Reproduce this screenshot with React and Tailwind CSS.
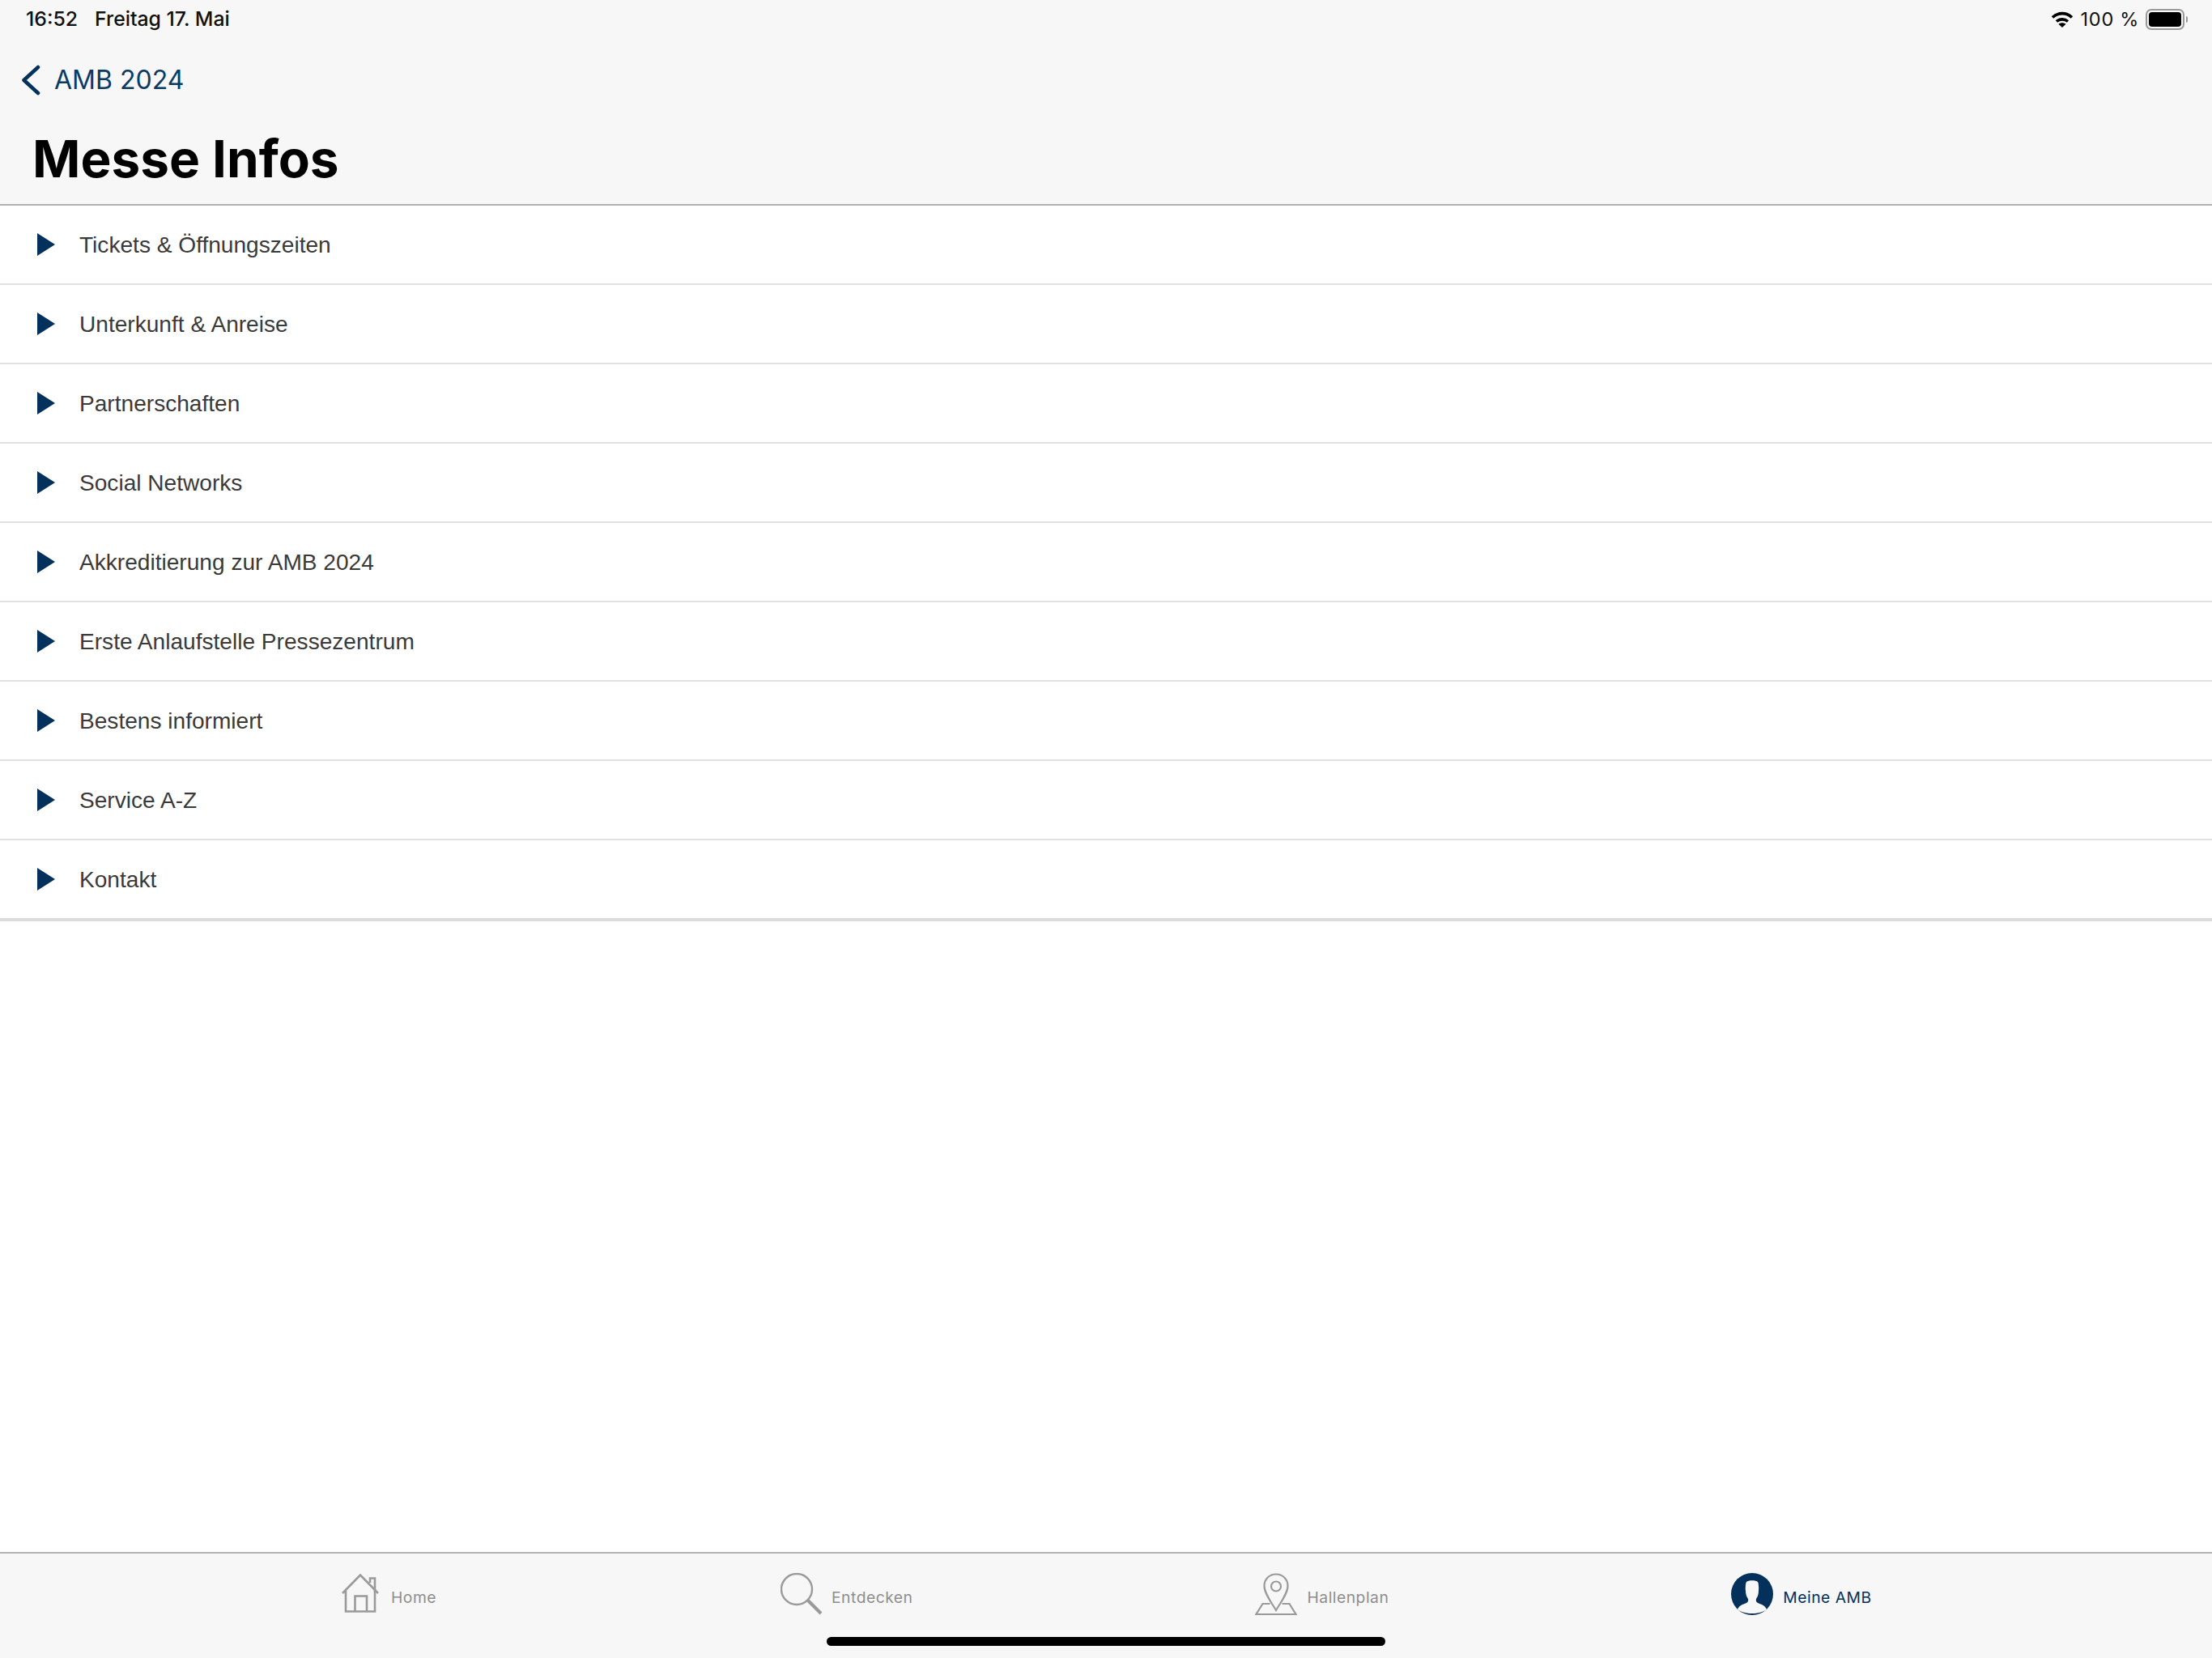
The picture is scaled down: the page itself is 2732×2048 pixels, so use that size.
const rows = [
  "Tickets & Öffnungszeiten",
  "Unterkunft & Anreise",
  "Partnerschaften",
  "Social Networks",
  "Akkreditierung zur AMB 2024",
  "Erste Anlaufstelle Pressezentrum",
  "Bestens informiert",
  "Service A-Z",
  "Kontakt",
];

function Row({ label, last }) {
  return (
    <div className={last ? "flex h-[100px] items-center border-b-4 border-[#dcdcdc] pl-[46px]" : "flex h-[98px] items-center border-b-2 border-[#e0e0e0] pl-[46px]"}>
      <svg width="22" height="28" viewBox="0 0 22 28" className="shrink-0">
        <path d="M0 0L22 14L0 28Z" fill="#04315c" />
      </svg>
      <span className="ml-[30px] mt-[2px] font-['Liberation_Sans',sans-serif] text-[28.1px] leading-none text-[#3a3a3a]">{label}</span>
    </div>
  );
}

function Tab({ ml, icon, label, gap, active }) {
  return (
    <div className={`${ml} flex items-center`}>
      {icon}
      <span className={`${gap} mt-[10px] font-['Inter',sans-serif] text-[19.3px] tracking-[0.5px] leading-none ${active ? "text-[#04315c]" : "text-[#8e8e8e]"}`}>{label}</span>
    </div>
  );
}

const HomeIcon = (
  <svg width="46" height="50" viewBox="0 0 46 50" fill="none" stroke="#9a9a9a" strokeWidth="2.6" className="shrink-0">
    <path d="M1 24L23 1.5L45 24" />
    <path d="M5 21V46.5H41V21" />
    <path d="M16.5 46.5V27.5H31V46.5" />
    <path d="M35 11V5.5H41V22" />
  </svg>
);
const SearchIcon = (
  <svg width="52" height="52" viewBox="0 0 52 52" fill="none" stroke="#9a9a9a" className="shrink-0">
    <circle cx="20" cy="20" r="19" strokeWidth="2.4" />
    <path d="M33.5 33.5L50 50" strokeWidth="4" />
  </svg>
);
const PinIcon = (
  <svg width="52" height="52" viewBox="0 0 52 52" fill="none" stroke="#9a9a9a" strokeWidth="2.2" className="shrink-0">
    <path d="M26 46C20 36 11.5 25 11.5 16C11.5 7.5 18 1.5 26 1.5C34 1.5 40.5 7.5 40.5 16C40.5 25 32 36 26 46Z" />
    <circle cx="26" cy="16.5" r="6" />
    <path d="M18.5 38H9.5L1.5 51H50.5L42.5 38H33.5" />
  </svg>
);
const UserIcon = (
  <svg width="52" height="52" viewBox="0 0 52 52" className="shrink-0">
    <circle cx="26" cy="26" r="26" fill="#04315c" />
    <path d="M8 45C10 40 14 39 19 37C21 36 21.5 34 21 32C19 29 18 26 18 22C17.5 19 18 12 19 11C21 8.5 31 8.5 33 11C34 12 34.5 19 34 22C34 26 33 29 31 32C30.5 34 31 36 33 37C38 39 42 40 44 45C40 48.5 33 50 26 50C19 50 12 48.5 8 45Z" fill="#f7f7f7" />
  </svg>
);

export default function App() {
  return (
    <div className="flex h-[2048px] w-[2732px] flex-col overflow-hidden bg-white font-['Inter',sans-serif]">
      <header className="h-[254px] shrink-0 border-b-2 border-[#b2b2b2] bg-[#f7f7f7]">
        <div className="flex h-[47px] items-center justify-between pl-[32px] pr-[30px] text-[#111111]">
          <div className="flex gap-[21px] text-[24.8px]">
            <span className="font-medium">16:52</span>
            <span className="font-medium">Freitag 17. Mai</span>
          </div>
          <div className="flex items-center text-[23.5px]">
            <svg width="28" height="20" viewBox="0 0 28 20" className="mr-[9px]" fill="none" stroke="#000000" strokeWidth="3.6">
              <path d="M2 7.5C9 1 19 1 26 7.5" />
              <path d="M7 12.5C11 9 17 9 21 12.5" />
              <path d="M14 20L9.5 15.8C12 13.8 16 13.8 18.5 15.8Z" fill="#000000" stroke="none" />
            </svg>
            <span className="tracking-[0.7px]">100 %</span>
            <div className="ml-[8px] flex h-[26px] w-[48px] items-center rounded-[7px] border-2 border-[#9a9a9a] p-[2px]">
              <div className="h-full w-full rounded-[4px] bg-black" />
            </div>
            <div className="ml-[2px] h-[8px] w-[2px] rounded-r-sm bg-[#9a9a9a]" />
          </div>
        </div>
        <div className="mt-[18px] flex h-[68px] items-center pl-[27px]">
          <svg width="24" height="38" viewBox="0 0 24 38" fill="none" stroke="#04315c" strokeWidth="4.5" strokeLinecap="round" strokeLinejoin="round">
            <path d="M20 3L2.5 19L20 35" />
          </svg>
          <span className="ml-[16px] text-[32px] leading-none text-[#0a3a66]">AMB 2024</span>
        </div>
        <h1 className="mt-[23px] pl-[40px] text-[63.8px] leading-[80px] font-bold text-black">Messe Infos</h1>
      </header>

      <main className="flex-1">
        {rows.map((r, i) => (
          <Row key={r} label={r} last={i === rows.length - 1} />
        ))}
      </main>

      <footer className="relative h-[131px] shrink-0 border-t-2 border-[#b2b2b2] bg-[#f7f7f7]">
        <div className="flex pt-[24px]">
          <Tab ml="ml-[422px]" icon={HomeIcon} label="Home" gap="ml-[15px]" />
          <Tab ml="ml-[425px]" icon={SearchIcon} label="Entdecken" gap="ml-[11px]" />
          <Tab ml="ml-[423px]" icon={PinIcon} label="Hallenplan" gap="ml-[12px]" />
          <Tab ml="ml-[423px]" icon={UserIcon} label="Meine AMB" gap="ml-[12px]" active />
        </div>
        <div className="absolute bottom-[15px] left-[1021px] h-[11px] w-[690px] rounded-full bg-black" />
      </footer>
    </div>
  );
}
